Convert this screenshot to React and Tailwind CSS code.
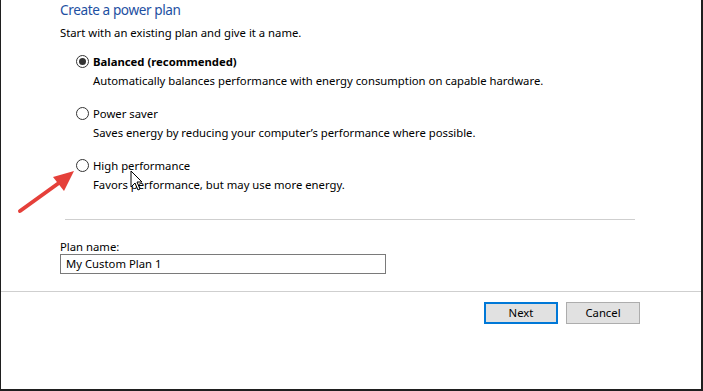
import React from "react";

const Radio = ({ checked }) => (
  <span className="w-[13px] h-[13px] rounded-full border border-[#333333] bg-white flex items-center justify-center shrink-0">
    {checked && <span className="w-[7px] h-[7px] rounded-full bg-[#333333]" />}
  </span>
);

const plans = [
  { name: "Balanced (recommended)", desc: "Automatically balances performance with energy consumption on capable hardware.", checked: true },
  { name: "Power saver", desc: "Saves energy by reducing your computer\u2019s performance where possible." },
  { name: "High performance", desc: "Favors performance, but may use more energy." },
];

export default function App() {
  return (
    <div className="relative w-[703px] h-[391px] bg-white border-l border-[#1f1f1f] border-r-2 border-b-2 text-black overflow-hidden font-['Noto_Sans','Open_Sans',sans-serif]">
      <div className="pl-[59px]">
        <h1 className="text-[13.6px] leading-[19px] tracking-[-0.4px] text-[#1e50a2]">Create a power plan</h1>
        <p className="mt-[6px] text-[11.3px] leading-[16px]">Start with an existing plan and give it a name.</p>

        <div className="mt-[11px] ml-[16px] flex flex-col gap-[14px]">
          {plans.map((p) => (
            <div key={p.name}>
              <div className="flex items-center gap-[4px] h-[19px]">
                <Radio checked={p.checked} />
                <span className={`text-[11.3px] leading-[19px] ${p.checked ? "font-bold" : ""}`}>{p.name}</span>
              </div>
              <div className="pl-[17px] text-[11.3px] leading-[19px]">{p.desc}</div>
            </div>
          ))}
        </div>

        <div className="mt-[25px] ml-[5px] w-[570px] h-px bg-[#cfcfcf]" />

        <div className="mt-[19px] text-[11.3px] leading-[15px]">Plan name:</div>
        <div className="w-[326px] h-[20px] border border-[#7a7a7a] px-[5px] text-[11.3px] leading-[18px]">
          My Custom Plan 1
        </div>
      </div>

      <div className="mt-[17px] h-px bg-[#cfcfcf]" />

      <div className="mt-[10px] flex justify-end gap-[8px] pr-[61px]">
        <button className="w-[74px] h-[22px] bg-[#e1e1e1] border-2 border-[#0078d7] text-[11.3px] leading-[18px]">
          Next
        </button>
        <button className="w-[74px] h-[22px] bg-[#e1e1e1] border border-[#adadad] text-[11.3px] leading-[20px]">
          Cancel
        </button>
      </div>

      <svg className="absolute left-0 top-[160px]" width="90" height="60" viewBox="0 0 90 60">
        <line x1="19" y1="51" x2="62" y2="20" stroke="#e5403a" strokeWidth="4" strokeLinecap="round" />
        <polygon points="73,11 52,17 63,31" fill="#e5403a" />
      </svg>

      <svg className="absolute left-[129px] top-[170px]" width="14" height="22" viewBox="0 0 14 22">
        <path d="M1 1 L1 17 L5 13 L8 20 L10 19 L7 12 L12 12 Z" fill="#ffffff" stroke="#000000" strokeWidth="1" strokeLinejoin="round" />
      </svg>
    </div>
  );
}
